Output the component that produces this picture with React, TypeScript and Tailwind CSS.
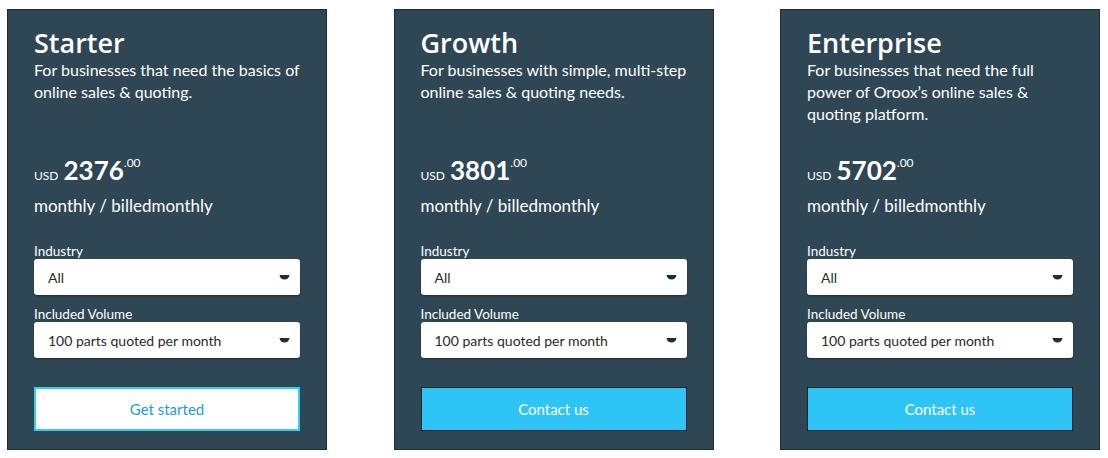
import React from "react";

type Plan = {
  name: string;
  desc: string;
  price: string;
  cta: string;
  primary: boolean;
};

const plans: Plan[] = [
  {
    name: "Starter",
    desc: "For businesses that need the basics of online sales & quoting.",
    price: "2376",
    cta: "Get started",
    primary: false,
  },
  {
    name: "Growth",
    desc: "For businesses with simple, multi-step online sales & quoting needs.",
    price: "3801",
    cta: "Contact us",
    primary: true,
  },
  {
    name: "Enterprise",
    desc: "For businesses that need the full power of Oroox’s online sales & quoting platform.",
    price: "5702",
    cta: "Contact us",
    primary: true,
  },
];

const Caret = () => (
  <svg width="11" height="6" viewBox="0 0 11 6" className="text-[#1e2d36]">
    <path d="M0.5 1 H10.5 C10 4 8 5.5 5.5 5.5 C3 5.5 1 4 0.5 1 Z" fill="currentColor" />
  </svg>
);

const Select = ({ label, value }: { label: string; value: string }) => (
  <div>
    <div className="text-[13.5px] leading-[15px] text-white">{label}</div>
    <div className="flex h-[36px] items-center justify-between rounded-[3px] bg-white pl-[14px] pr-[10px] text-[14px] text-[#2a2a2a] shadow-[0_1px_2px_rgba(0,0,0,0.4)]">
      <span>{value}</span>
      <Caret />
    </div>
  </div>
);

const PlanCard = ({ plan }: { plan: Plan }) => (
  <div className="flex h-[441px] w-[320px] flex-col border border-[#1c2c35] bg-[#2f4755] px-[26px] pt-[17px] text-white">
    <h3 className="font-['Open_Sans',sans-serif] text-[27px] font-semibold leading-[32px]">
      {plan.name}
    </h3>
    <p className="h-[95px] text-[16px] leading-[22px]">{plan.desc}</p>
    <div className="flex items-baseline leading-[32px]">
      <span className="mr-[5px] text-[12px]">USD</span>
      <span className="text-[26px] font-bold">{plan.price}</span>
      <span className="self-start pt-[1px] text-[12px] leading-[16px]">.00</span>
    </div>
    <div className="mt-[3px] text-[17px] leading-[22px]">monthly / billedmonthly</div>
    <div className="mt-[27px] flex flex-col gap-[12px]">
      <Select label="Industry" value="All" />
      <Select label="Included Volume" value="100 parts quoted per month" />
    </div>
    <button
      className={
        plan.primary
          ? "mt-[29px] h-[44px] w-full border border-[#15242c] bg-[#2ec4f6] text-[15px] text-white"
          : "mt-[29px] h-[44px] w-full border-2 border-[#2fd0f0] bg-white text-[15px] text-[#1a9ed3]"
      }
    >
      {plan.cta}
    </button>
  </div>
);

export default function App() {
  return (
    <div className="min-h-[458px] w-[1108px] bg-white pl-[7px] pt-[9px] font-['Lato',sans-serif]">
      <div className="flex gap-[66.5px]">
        {plans.map((p) => (
          <PlanCard key={p.name} plan={p} />
        ))}
      </div>
    </div>
  );
}
